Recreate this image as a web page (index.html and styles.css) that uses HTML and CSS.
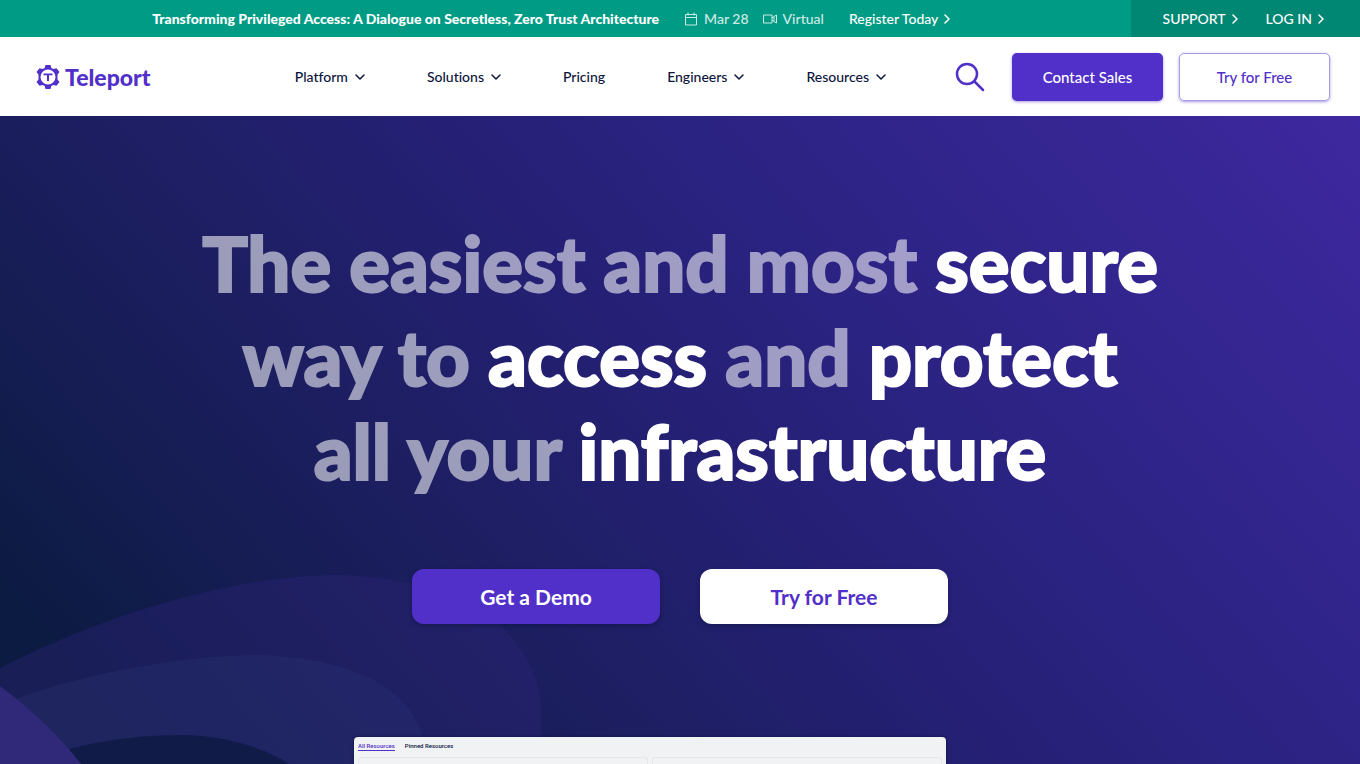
FILE: index.html
```html
<!DOCTYPE html>
<html lang="en">
<head>
    <meta charset="UTF-8">
    <meta name="viewport" content="width=device-width, initial-scale=1.0">
    <title>Teleport</title>
    <link rel="stylesheet" href="styles.css">
</head>
<body>
    <div class="banner">
        <div class="banner-event">
            <strong class="event-title">Transforming Privileged Access: A Dialogue on Secretless, Zero Trust Architecture</strong>
            <div class="event-info">
                <span class="event-meta">
                    <svg width="14" height="14" viewBox="0 0 14 14"><path d="M1.500 2.500h11v10.500h-11zM1.500 5.500h11M4 .5v3M10 .5v3"/></svg>
                    Mar 28
                </span>
                <span class="event-meta">
                    <svg width="14" height="14" viewBox="0 0 14 14"><path d="M.5 3h8.500v8h-8.500zM9 6l2-1.500M9 8l2 1.500M11 4.500l2.500-1.500v8l-2.500-1.500z"/></svg>
                    Virtual
                </span>
            </div>
            <a href="#" class="banner-link">Register Today <svg class="chevron" width="6" height="10" viewBox="0 0 6 10"><path d="M1 1l4 4-4 4"/></svg></a>
        </div>
        <div class="banner-account">
            <a href="#" class="banner-link">SUPPORT <svg class="chevron" width="6" height="10" viewBox="0 0 6 10"><path d="M1 1l4 4-4 4"/></svg></a>
            <a href="#" class="banner-link">LOG IN <svg class="chevron" width="6" height="10" viewBox="0 0 6 10"><path d="M1 1l4 4-4 4"/></svg></a>
        </div>
    </div>

    <header class="header">
        <a href="#" class="logo">
            <svg width="24" height="24" viewBox="0 0 24 24">
                <path fill-rule="evenodd" d="M9.500 0h5l.8 3 2 1.100 3.200-.9L23.500 7l-2 2.500v5l2 2.500-3 3.800-3.200-.9-2 1.100-.8 3h-5l-.8-3-2-1.100-3.200.9L.5 17l2-2.500v-5L.5 7l3-3.800 3.200.9 2-1.100zM12 4.500a7.500 7.500 0 1 0 0 15a7.500 7.500 0 1 0 0-15z"/>
                <path d="M7.500 8.500h9v1.800h-3.500V16h-2v-5.700H7.500z"/>
            </svg>
            Teleport
        </a>
        <nav class="nav">
            <button class="nav-item" type="button">Platform <svg class="chevron" width="10" height="6" viewBox="0 0 10 6"><path d="M1 1l4 4 4-4"/></svg></button>
            <button class="nav-item" type="button">Solutions <svg class="chevron" width="10" height="6" viewBox="0 0 10 6"><path d="M1 1l4 4 4-4"/></svg></button>
            <a href="#" class="nav-item">Pricing</a>
            <button class="nav-item" type="button">Engineers <svg class="chevron" width="10" height="6" viewBox="0 0 10 6"><path d="M1 1l4 4 4-4"/></svg></button>
            <button class="nav-item" type="button">Resources <svg class="chevron" width="10" height="6" viewBox="0 0 10 6"><path d="M1 1l4 4 4-4"/></svg></button>
        </nav>
        <div class="header-actions">
            <button class="search" type="button" aria-label="Search">
                <svg width="30" height="30" viewBox="0 0 30 30"><circle cx="12" cy="12" r="10"/><path d="M19.500 19.500l8.500 8.500"/></svg>
            </button>
            <a href="#" class="button button-primary">Contact Sales</a>
            <a href="#" class="button button-outline">Try for Free</a>
        </div>
    </header>

    <main class="hero">
        <svg class="hero-waves" width="560" height="190" viewBox="0 0 560 190">
            <path fill="#2e2478" fill-opacity=".4" d="M0 93C100 42 230 0 340 0C470 4 535 60 541 130Q543 160 538 190H0z"/>
            <path fill="#344080" fill-opacity=".2" d="M0 130C80 97 190 80 260 80C350 84 425 110 427 190H0z"/>
            <path fill="#101b48" d="M70 174C110 163 150 160 185 160C235 162 270 176 290 190H70z"/>
            <path fill="#30297a" d="M0 111C32 135 60 162 82 190H0z"/>
        </svg>
        <h1 class="hero-title">
            <span class="muted">The easiest and most</span> secure<br>
            <span class="muted">way to</span> access <span class="muted">and</span> protect<br>
            <span class="muted">all your</span> infrastructure
        </h1>
        <div class="hero-actions">
            <a href="#" class="button-large button-primary">Get a Demo</a>
            <a href="#" class="button-large button-white">Try for Free</a>
        </div>
        <section class="preview">
            <div class="preview-tabs">
                <a href="#" class="tab tab-active">All Resources</a>
                <a href="#" class="tab">Pinned Resources</a>
            </div>
            <div class="preview-cards">
                <div class="preview-card"></div>
                <div class="preview-card"></div>
            </div>
        </section>
    </main>
</body>
</html>
```

FILE: styles.css
```css
* {
    box-sizing: border-box;
}
body {
    margin: 0;
    min-height: 100vh;
    display: flex;
    flex-direction: column;
    overflow: hidden;
    font-family: "Lato Medium", Lato, sans-serif;
    font-size: 14px;
    font-variant-ligatures: none;
    color: #0c143d;
}
a {
    color: inherit;
    text-decoration: none;
}
button {
    font: inherit;
    font-variant-ligatures: none;
    color: inherit;
    border: none;
    background: none;
    padding: 0;
    cursor: pointer;
}
svg {
    flex: none;
}
.chevron {
    fill: none;
    stroke: currentColor;
    stroke-width: 1.5;
    stroke-linecap: round;
    stroke-linejoin: round;
}

/* Top banner */
.banner {
    display: flex;
    height: 37px;
    background-color: #009b84;
    color: #fff;
}
.banner-event {
    flex: 1;
    display: flex;
    align-items: center;
    justify-content: center;
    gap: 25px;
    padding-right: 28px;
}
.event-title {
    font-family: Lato, sans-serif;
    font-weight: 900;
}
.event-info {
    display: flex;
    gap: 14px;
    opacity: 0.8;
}
.event-meta {
    display: flex;
    align-items: center;
    gap: 6px;
}
.event-meta svg {
    fill: none;
    stroke: currentColor;
}
.banner-link {
    display: flex;
    align-items: center;
    gap: 6px;
}
.banner-account {
    display: flex;
    align-items: center;
    gap: 28px;
    padding: 0 36px 0 32px;
    background-color: #008774;
}

/* Header */
.header {
    display: flex;
    align-items: center;
    height: 79px;
    padding: 0 30px 0 36px;
    background-color: #fff;
}
.logo {
    display: flex;
    align-items: center;
    gap: 5px;
    font-family: Lato, sans-serif;
    font-size: 23px;
    font-weight: 900;
    color: #512fc9;
}
.logo svg {
    fill: currentColor;
}
.nav {
    display: flex;
    gap: 62px;
    margin-left: auto;
}
.nav-item {
    display: flex;
    align-items: center;
    gap: 7px;
}
.header-actions {
    display: flex;
    align-items: center;
    gap: 16px;
    margin-left: 69px;
}
.search {
    display: flex;
    margin-right: 11px;
}
.search svg {
    fill: none;
    stroke: #512fc9;
    stroke-width: 2.5;
    stroke-linecap: round;
}
.button {
    display: flex;
    align-items: center;
    justify-content: center;
    width: 151px;
    height: 48px;
    border-radius: 5px;
    font-size: 15px;
    box-shadow: 0 1px 3px rgba(81, 47, 201, 0.5);
}
.button-primary {
    background-color: #512fc9;
    color: #fff;
}
.button-outline {
    border: 1px solid #a99ae2;
    color: #512fc9;
}

/* Hero */
.hero {
    position: relative;
    flex: 1;
    display: flex;
    flex-direction: column;
    align-items: center;
    padding-top: 100px;
    background: linear-gradient(48deg, #0c1b42 8%, #1b1e5e 31%, #252075 52%, #2e2488 72%, #3e289f 100%);
}
.hero-waves {
    position: absolute;
    left: 0;
    bottom: 0;
}
.hero-title {
    position: relative;
    margin: 0;
    font-family: "Lato Black", Lato, sans-serif;
    font-size: 76px;
    font-weight: 900;
    line-height: 94px;
    text-align: center;
    color: #fff;
    -webkit-text-stroke: 2px #fff;
}
.muted {
    opacity: 0.56;
}
.hero-actions {
    position: relative;
    display: flex;
    gap: 40px;
    margin-top: 71px;
}
.button-large {
    display: flex;
    align-items: center;
    justify-content: center;
    width: 248px;
    height: 55px;
    border-radius: 12px;
    font-family: Lato, sans-serif;
    font-size: 21px;
    font-weight: 700;
    box-shadow: 0 2px 4px rgba(12, 20, 61, 0.5);
}
.button-white {
    background-color: #fff;
    color: #512fc9;
}

/* Product preview */
.preview {
    position: relative;
    width: 592px;
    margin-top: 113px;
    margin-right: 60px;
    padding: 5px 4px 0;
    border-radius: 4px 4px 0 0;
    background-color: #f1f2f4;
    box-shadow: 0 0 3px #0c143d;
}
.preview-tabs {
    display: flex;
    gap: 10px;
    font: 500 6px/8px Roboto, sans-serif;
}
.tab-active {
    color: #512fc9;
    border-bottom: 1px solid #512fc9;
}
.preview-cards {
    display: flex;
    gap: 4px;
    margin-top: 6px;
}
.preview-card {
    flex: 1;
    height: 8px;
    border: 1px solid #e4e6e9;
    border-bottom: none;
    border-radius: 3px 3px 0 0;
}
```
